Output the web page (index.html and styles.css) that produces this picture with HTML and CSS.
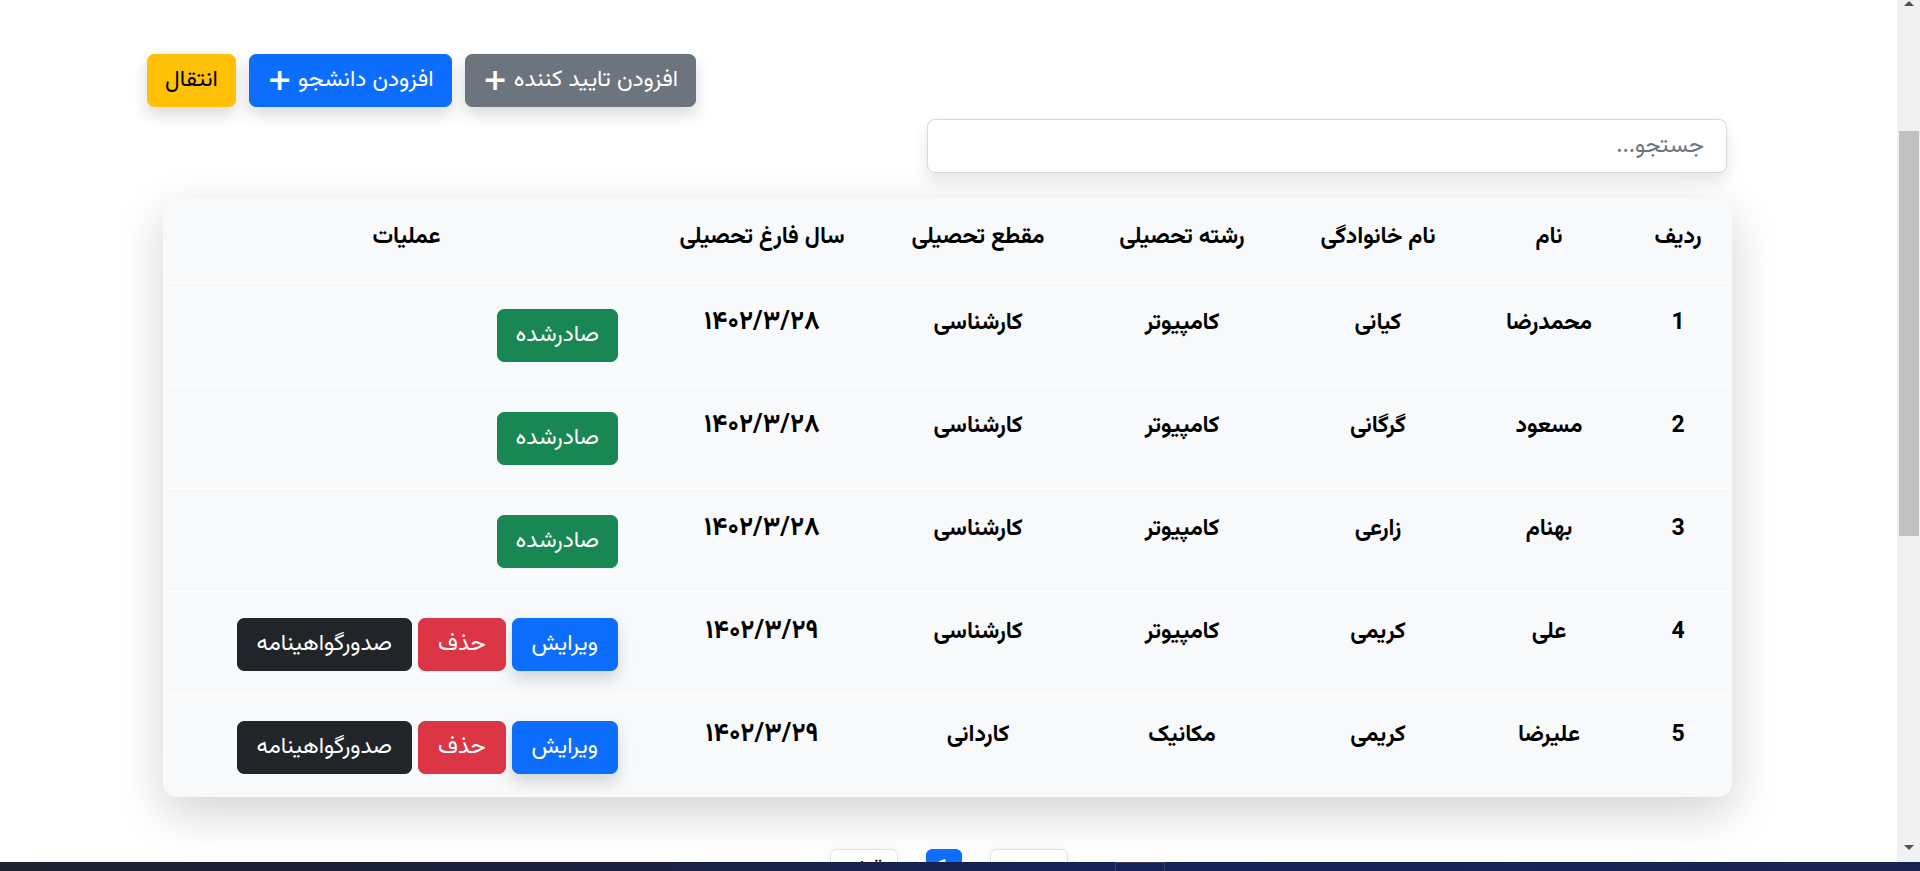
FILE: index.html
```html
<!DOCTYPE html>
<html lang="fa">
<head>
<meta charset="utf-8">
<title>لیست دانشجویان</title>
<link rel="stylesheet" href="styles.css">
</head>
<body>
<div class="screen">
  <div class="viewport">
    <main class="page" dir="rtl">
      <div class="toolbar">
        <button class="btn btn-secondary btn-raised">افزودن تایید کننده <span class="plus">+</span></button>
        <button class="btn btn-primary btn-raised">افزودن دانشجو <span class="plus">+</span></button>
        <button class="btn btn-warning btn-raised">انتقال</button>
      </div>
      <div class="search-row">
        <input class="search" type="text" placeholder="جستجو...">
      </div>
      <div class="card">
        <table class="table">
          <colgroup>
            <col class="c1"><col class="c2"><col class="c3"><col class="c4"><col class="c5"><col class="c6"><col class="c7">
          </colgroup>
          <thead>
            <tr><th>ردیف</th><th>نام</th><th>نام خانوادگی</th><th>رشته تحصیلی</th><th>مقطع تحصیلی</th><th>سال فارغ تحصیلی</th><th>عملیات</th></tr>
          </thead>
          <tbody>
            <tr><td>1</td><td>محمدرضا</td><td>کیانی</td><td>کامپیوتر</td><td>کارشناسی</td><td class="date">۱۴۰۲/۳/۲۸</td><td class="ops"><div class="ops-wrap"><span class="btn btn-success">صادرشده</span></div></td></tr>
            <tr><td>2</td><td>مسعود</td><td>گرگانی</td><td>کامپیوتر</td><td>کارشناسی</td><td class="date">۱۴۰۲/۳/۲۸</td><td class="ops"><div class="ops-wrap"><span class="btn btn-success">صادرشده</span></div></td></tr>
            <tr><td>3</td><td>بهنام</td><td>زارعی</td><td>کامپیوتر</td><td>کارشناسی</td><td class="date">۱۴۰۲/۳/۲۸</td><td class="ops"><div class="ops-wrap"><span class="btn btn-success">صادرشده</span></div></td></tr>
            <tr><td>4</td><td>علی</td><td>کریمی</td><td>کامپیوتر</td><td>کارشناسی</td><td class="date">۱۴۰۲/۳/۲۹</td><td class="ops"><div class="ops-wrap"><button class="btn btn-primary btn-raised">ویرایش</button><button class="btn btn-danger">حذف</button><button class="btn btn-dark">صدورگواهینامه</button></div></td></tr>
            <tr><td>5</td><td>علیرضا</td><td>کریمی</td><td>مکانیک</td><td>کاردانی</td><td class="date">۱۴۰۲/۳/۲۹</td><td class="ops"><div class="ops-wrap"><button class="btn btn-primary btn-raised">ویرایش</button><button class="btn btn-danger">حذف</button><button class="btn btn-dark">صدورگواهینامه</button></div></td></tr>
          </tbody>
        </table>
      </div>
      <nav class="pagination">
        <a class="page-link page-wide-r">بعدی</a>
        <a class="page-link active">1</a>
        <a class="page-link page-wide-l">قبلی</a>
      </nav>
    </main>
    <div class="scrollbar">
      <div class="arrow arrow-up"></div>
      <div class="track"><div class="thumb"></div></div>
      <div class="arrow arrow-down"></div>
    </div>
  </div>
  <div class="taskbar"><div class="task-icon"></div></div>
</div>
</body>
</html>
```
FILE: styles.css
```css
* { box-sizing: border-box; }
html, body { margin: 0; padding: 0; height: 100%; overflow: hidden; background: #fff; }
body { font-family: "Vazirmatn", "Noto Sans Arabic", "DejaVu Sans", sans-serif; color: #212529; }

.screen { display: flex; flex-direction: column; height: 871px; }
.viewport { display: flex; flex: 1; min-height: 0; overflow: hidden; }
.page { flex: 1; min-width: 0; overflow: hidden; padding-top: 54px; background: #fff; }

/* toolbar */
.toolbar { display: flex; justify-content: flex-end; gap: 13px; padding-left: 147px; }
.btn {
  display: inline-flex; align-items: center; justify-content: center; gap: 6px;
  height: 53px; padding: 0 17px; border: 1px solid transparent; border-radius: 7px;
  font-family: inherit; font-size: 23px; font-weight: 400; line-height: 1; color: #fff; white-space: nowrap; cursor: pointer;
}
.btn-raised { box-shadow: 0 8px 16px rgba(0,0,0,.15); }
.btn-secondary { background: #6c757d; border-color: #6c757d; }
.btn-primary { background: #0d6efd; border-color: #0d6efd; }
.btn-warning { background: #ffc107; border-color: #ffc107; color: #000; }
.btn-success { background: #198754; border-color: #198754; }
.btn-danger { background: #dc3545; border-color: #dc3545; }
.btn-dark { background: #212529; border-color: #212529; }
.plus { font-family: "DejaVu Sans", sans-serif; font-size: 30px; font-weight: 700; line-height: 1; margin-top: -2px; }

/* search */
.search-row { display: flex; padding-right: 170px; margin-top: 12px; }
.search {
  width: 800px; height: 54px; padding: 0 22px; border: 1px solid #d6d8db; border-radius: 8px;
  font-family: inherit; font-size: 23px; color: #212529; background: #fff; direction: rtl;
  box-shadow: 0 8px 16px rgba(0,0,0,.10);
}
.search::placeholder { color: #6c757d; }

/* card & table */
.card {
  margin: 25px 165px 0 163px; width: 1569px; background: #f8f9fa; border-radius: 14px;
  box-shadow: 0 16px 48px rgba(0,0,0,.175); overflow: hidden;
}
.table { width: 100%; border-collapse: collapse; table-layout: fixed; }
.c1 { width: 108px; } .c2 { width: 150px; } .c3 { width: 192px; } .c4 { width: 200px; }
.c5 { width: 208px; } .c6 { width: 224px; } .c7 { width: 487px; }
.table th, .table td { text-align: center; vertical-align: top; font-weight: 700; font-size: 23px; color: #000; }
.table th { height: 84px; padding: 25px 8px 0; line-height: 28px; border-bottom: 1px solid #ffffff; }
.table td { height: 103px; padding: 26px 8px 0; line-height: 28px; border-bottom: 1px solid #ffffff; }
.table td.date { font-size: 26px; }
.table tbody tr:last-child td { border-bottom: 0; }
.table td.ops { padding: 26px 32px 0 8px; }
.ops-wrap { display: flex; gap: 6px; justify-content: flex-start; }
.ops-wrap .btn { font-weight: 400; padding: 0 19px; }
.ops-wrap .btn-success { padding: 0 18px; }

/* pagination */
.pagination { display: flex; justify-content: center; gap: 28px; margin-top: 52px; }
.page-link {
  display: inline-flex; align-items: center; justify-content: center; height: 42px; padding: 0 16px;
  border: 1px solid #dee2e6; border-radius: 6px; background: #fff; color: #212529; font-size: 23px;
  box-shadow: 0 6px 14px rgba(0,0,0,.08);
}
.page-link.active { background: #0d6efd; border-color: #0d6efd; color: #fff; width: 36px; padding: 0; }
.page-wide-r { width: 78px; }
.page-wide-l { width: 68px; }

/* scrollbar */
.scrollbar { width: 23px; background: #f1f1f1; display: flex; flex-direction: column; align-items: stretch; }
.arrow { height: 17px; display: flex; justify-content: center; }
.arrow-up::before { content: ""; margin-top: 1px; border-left: 5px solid transparent; border-right: 5px solid transparent; border-bottom: 5px solid #505050; height: 0; }
.arrow-down { align-items: flex-end; }
.arrow-down::before { content: ""; margin-bottom: 12px; border-left: 5px solid transparent; border-right: 5px solid transparent; border-top: 5px solid #505050; height: 0; }
.track { flex: 1; padding: 114px 1px 0 2px; }
.thumb { height: 405px; background: #c1c1c1; }

/* taskbar */
.taskbar { height: 9px; background: linear-gradient(90deg, #1d2130 0%, #1b2140 30%, #15225a 60%, #1a2350 100%); }
.task-icon { margin-left: 1115px; width: 50px; height: 9px; border-top: 1px solid #3a4160; border-left: 1px solid #3a4160; border-right: 1px solid #3a4160; border-radius: 3px 3px 0 0; }
```
